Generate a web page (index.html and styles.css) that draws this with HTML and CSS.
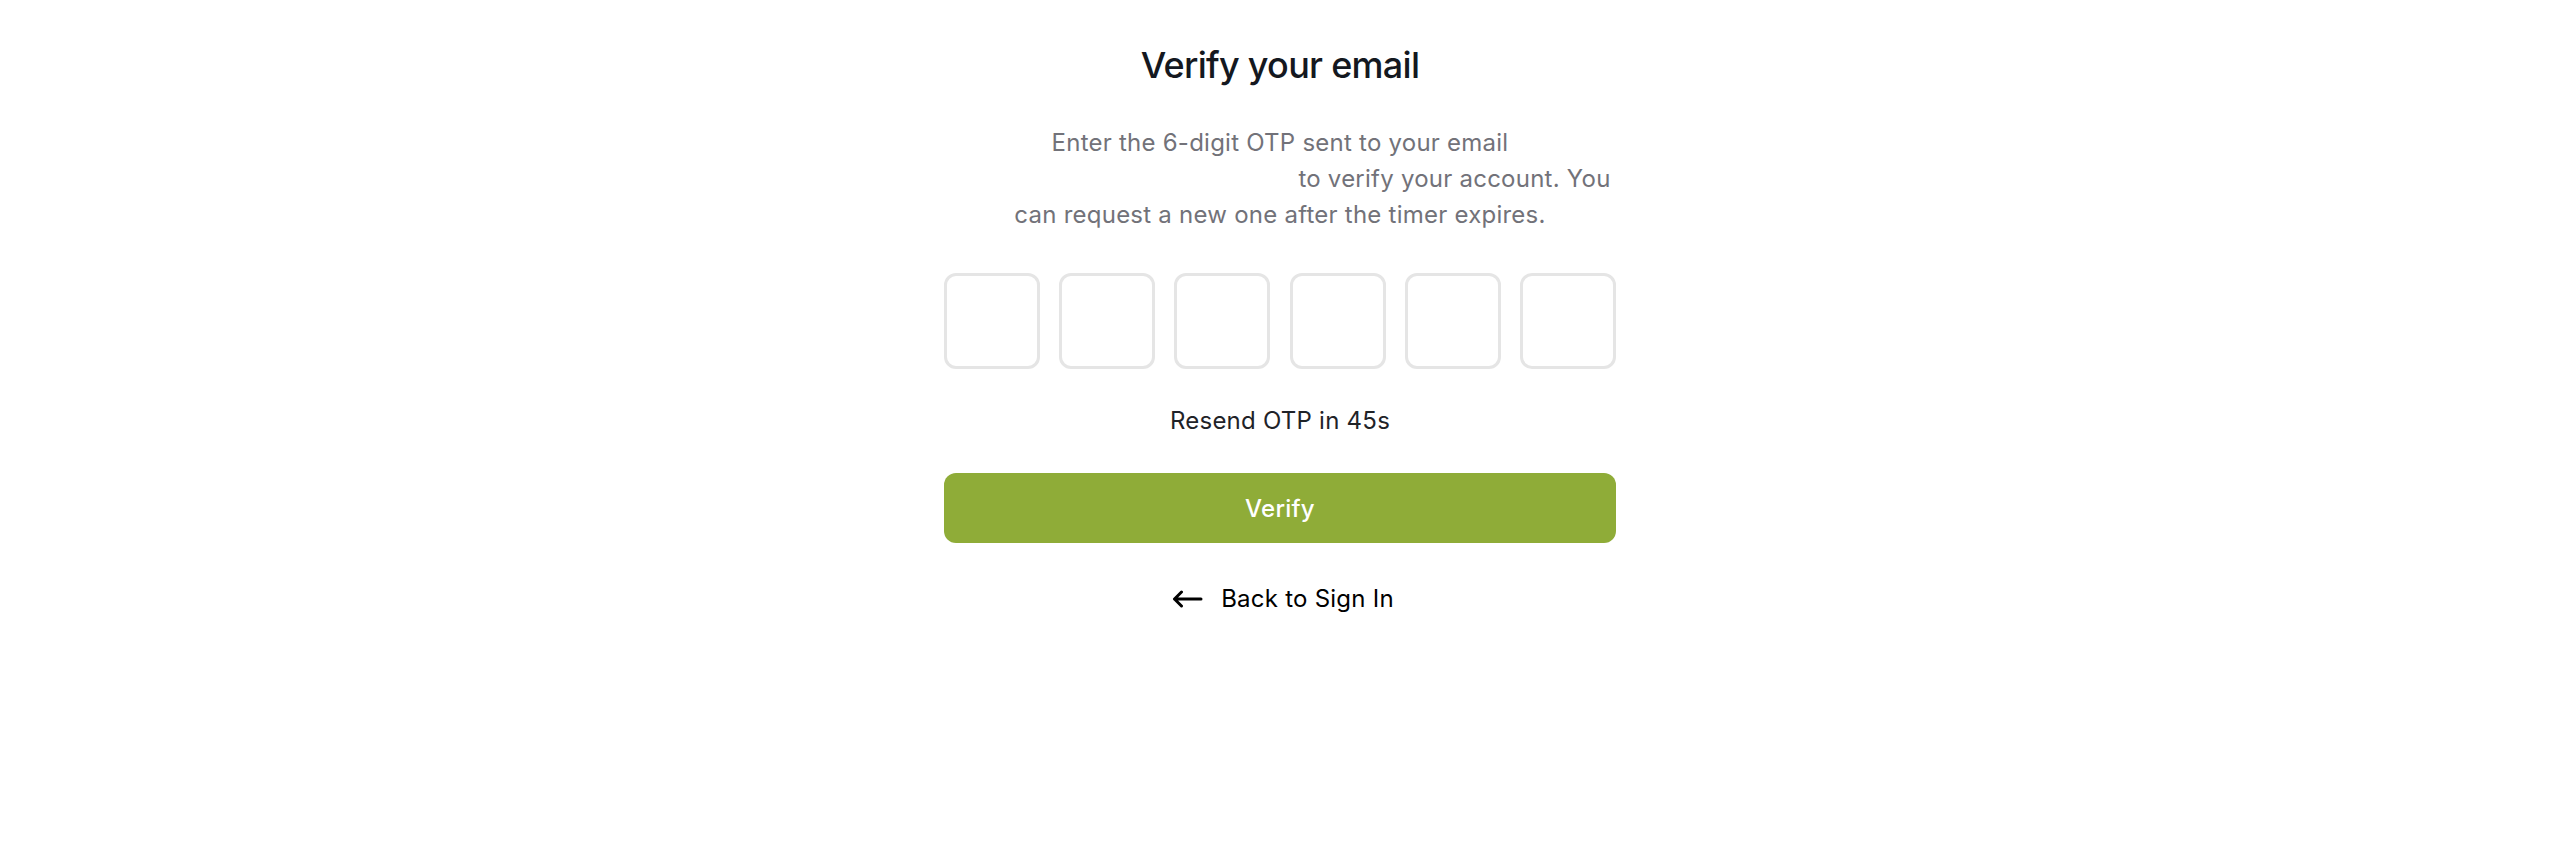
FILE: index.html
```html
<!DOCTYPE html>
<html lang="en">
<head>
<meta charset="utf-8">
<title>Verify your email</title>
<link rel="stylesheet" href="styles.css">
</head>
<body>
<main class="page">
  <section class="card">
    <h1 class="title">Verify your email</h1>
    <p class="subtitle">Enter the 6-digit OTP sent to your email <span class="email"></span> to verify your account. You can request a new one after the timer expires.</p>
    <div class="otp">
      <input class="otp-box" type="text" maxlength="1">
      <input class="otp-box" type="text" maxlength="1">
      <input class="otp-box" type="text" maxlength="1">
      <input class="otp-box" type="text" maxlength="1">
      <input class="otp-box" type="text" maxlength="1">
      <input class="otp-box" type="text" maxlength="1">
    </div>
    <p class="resend">Resend OTP in 45s</p>
    <button class="verify" type="button">Verify</button>
    <a class="back" href="#">
      <svg class="back-icon" width="31" height="18" viewBox="0 0 31 18" fill="none" stroke="#000" stroke-width="3" stroke-linecap="round" stroke-linejoin="round"><path d="M9.5 2 2.5 9l7 7M2.5 9h26.5"/></svg>
      <span>Back to Sign In</span>
    </a>
  </section>
</main>
</body>
</html>
```
FILE: styles.css
```css
* { box-sizing: border-box; }
html, body { margin: 0; padding: 0; background: #fff; }
body { font-family: Inter, "Noto Sans", sans-serif; color: #111827; }
.page { display: flex; justify-content: center; padding-top: 45px; }
.card { width: 672px; display: flex; flex-direction: column; align-items: center; gap: 40px; }
.title { margin: 0; font-size: 36px; line-height: 40px; font-weight: 500; letter-spacing: -0.02em; color: #141820; }
.subtitle { margin: 0; width: 672px; text-align: center; font-size: 24px; line-height: 36px; letter-spacing: 0.01em; color: #727279; }
.email { display: inline-block; width: 342px; height: 1px; }
.otp { width: 672px; display: flex; justify-content: space-between; margin-top: 0; }
.otp-box { width: 96px; height: 96px; border: 3px solid #e5e5e5; border-radius: 12px; background: #fff; font: inherit; font-size: 32px; text-align: center; outline: none; padding: 0; }
.resend { margin: 0; font-size: 24px; line-height: 24px; letter-spacing: 0.01em; color: #1f2328; }
.verify { width: 672px; height: 70px; border: 0; border-radius: 12px; background: #8fac38; color: #fff; font-family: inherit; font-size: 24px; font-weight: 500; letter-spacing: 0.01em; cursor: pointer; }
.back { display: flex; align-items: center; gap: 18px; padding-left: 6px; color: #000; text-decoration: none; font-size: 24px; line-height: 32px; letter-spacing: 0.01em; }
.back-icon { display: block; }
```
